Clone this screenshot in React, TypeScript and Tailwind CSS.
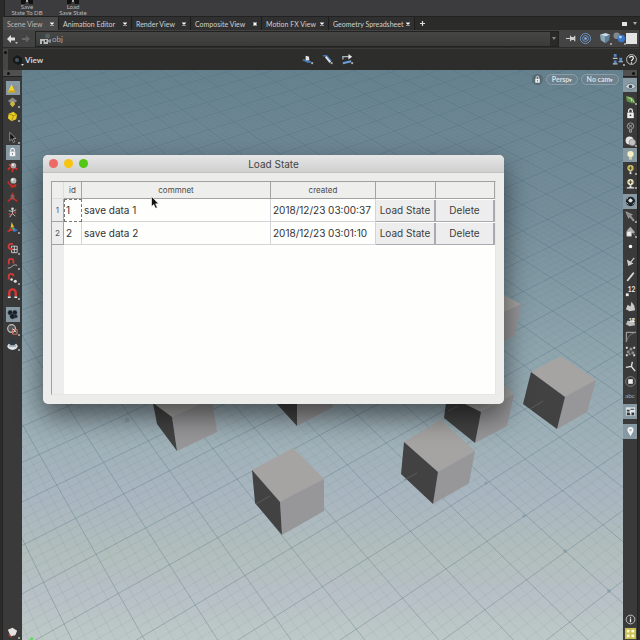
import React from "react";

type Pt = [number, number];

const UI = "font-['Lato','Noto_Sans',sans-serif]";

/* Ground plane to viewport projection */
function project(u: number, v: number): Pt {
  const w = 1 - 0.0358 * u + 0.024 * v;
  return [
    (14.55 * u + 45.4 * v + 128.3) / w - 22,
    (11.85 * u - 9.66 * v + 413.3) / w - 70,
  ];
}

function gridLines(major: boolean): string {
  const parts: string[] = [];
  const add = (a: Pt, b: Pt) =>
    parts.push(`M${a[0].toFixed(1)} ${a[1].toFixed(1)}L${b[0].toFixed(1)} ${b[1].toFixed(1)}`);
  for (let i = -150; i <= 100; i++) {
    if ((i % 5 === 0) !== major) continue;
    const u = i / 5;
    add(project(u, Math.max(-30, (0.0358 * u - 0.55) / 0.024)), project(u, 50));
  }
  for (let i = -125; i <= 225; i++) {
    if ((i % 5 === 0) !== major) continue;
    const v = i / 5;
    add(project(-32, v), project(Math.min(26, (0.55 + 0.024 * v) / 0.0358), v));
  }
  return parts.join("");
}

const MAJOR = gridLines(true);
const MINOR = gridLines(false);

const CUBES: { top: string; dark: string; side: string }[] = [
  { top: "500,293 521,304 505,313 490,305", dark: "", side: "500,314 521,304 515,336 500,343" },
  { top: "153,403 172,417 212,399 200,392", dark: "153,403 172,417 177,451 157,424", side: "172,417 212,399 217,432 177,451" },
  { top: "", dark: "276,403 297,390 297,426", side: "297,395 333,390 333,407 297,426" },
  { top: "447,395 481,412 514,394 500,382", dark: "447,395 481,412 475,443 444,418", side: "481,412 514,394 507,426 475,443" },
  { top: "404,442 441,420 475,451 438,472", dark: "404,442 438,472 433,504 401,474", side: "438,472 475,451 469,483 433,504" },
  { top: "531,372 561,356 596,380 565,397", dark: "531,372 565,397 557,429 523,404", side: "565,397 596,380 587,412 557,429" },
  { top: "252,470 293,448 324,479 280,502", dark: "252,470 280,502 282,535 255,503", side: "280,502 324,479 324,511 282,535" },
];

function Scene() {
  return (
    <svg className="absolute inset-0 h-full w-full" viewBox="0 0 601 570" preserveAspectRatio="xMidYMin slice" aria-hidden="true">
      <defs>
        <linearGradient id="sky" x1="0" y1="0" x2="0" y2="1">
          <stop offset="0" stopColor="#67828f" />
          <stop offset="0.25" stopColor="#758e9a" />
          <stop offset="0.5" stopColor="#8fa5ae" />
          <stop offset="0.66" stopColor="#a0b1b8" />
          <stop offset="0.75" stopColor="#a9b6c0" />
          <stop offset="0.85" stopColor="#b2bebc" />
          <stop offset="0.92" stopColor="#b7c0c6" />
          <stop offset="1" stopColor="#bdc9c6" />
        </linearGradient>
      </defs>
      <rect width="601" height="570" fill="url(#sky)" />
      <path d={MINOR} stroke="#5f7f8b" strokeOpacity="0.2" strokeWidth="0.6" fill="none" />
      <path d={MAJOR} stroke="#4f6f80" strokeOpacity="0.42" strokeWidth="0.8" fill="none" />
      <g transform="translate(-22 -70)">
        {CUBES.map((c, i) => (
          <g key={i}>
            <polygon points={c.top} fill="#a5a4a2" />
            <polygon points={c.side} fill="#979698" />
            <polygon points={c.dark} fill="#424243" />
          </g>
        ))}
        <path d="M256 504l14-8M530 409l13-8M404 480l13-7M448 411l10-5" stroke="#696d6f" strokeWidth="0.6" />
        <path d="M29 640l2-3 3 1-2 3z" fill="#69d66b" />
        <g fill="#8498a5" fillOpacity="0.8">
          <circle cx="127" cy="420" r="2.5" />
          <circle cx="486" cy="483" r="1.6" />
          <circle cx="524" cy="516" r="1.6" />
          <circle cx="565" cy="551" r="1.8" />
          <circle cx="609" cy="591" r="1.8" />
        </g>
      </g>
    </svg>
  );
}

const G: Record<string, React.ReactNode> = {
  cone: (<><circle cx="9.5" cy="6.5" r="3" fill="#8c8f91" /><path d="M6 2.5L10 11H2z" fill="#f3d62a" /><path d="M2 11h8l-1-1.8H3z" fill="#caa51c" /></>),
  diamonds: (<><path d="M7 1.5l5 4-5 3.5-5-3.5z" fill="#8b8b8b" /><path d="M7 5l3 3.500-3 3.500-3-3.500z" fill="#c9b740" /></>),
  cube: (<><path d="M3 4l5-2 4 3-1 5-5 2-4-3z" fill="#e8cb27" /><path d="M3 4l5 2 4-1M8 6l-2 6" stroke="#a98d12" fill="none" /></>),
  arrow: (<path d="M4 1.500v9l2.200-2 1.800 4 1.500-.8-1.800-3.700h3z" fill="#111" stroke="#b9b9b9" strokeWidth="0.7" />),
  lock: (<><rect x="4" y="6" width="6" height="5" fill="#f4f4f4" /><path d="M5 6V4.500a2 2 0 014 0V6" stroke="#f4f4f4" strokeWidth="1.200" fill="none" /><path d="M7 7.500v2" stroke="#7b8790" /></>),
  move: (<><path d="M2 9l3-2M12 9l-3-2M7 8v4M3 4l3 1" stroke="#d22f27" strokeWidth="2" /><circle cx="8" cy="5" r="3" fill="#a8aaac" /><circle cx="7.500" cy="4.200" r="1.200" fill="#eee" /></>),
  rotate: (<><path d="M2 6c1 4 6 6 9 3M5 12l6-1" stroke="#c22d27" strokeWidth="1.800" fill="none" /><circle cx="8" cy="5" r="3.200" fill="#b5b7b8" /><circle cx="7" cy="4" r="1.200" fill="#fff" /></>),
  scale: (<><path d="M7 2v5M2 11l4-3M12 11L8 8" stroke="#c22d27" strokeWidth="1.800" /><rect x="5" y="4" width="4" height="5" fill="#8e5a5a" /></>),
  pose: (<><path d="M7 4v4l-3 4M7 8l3 3M3 5l4 1 4-2" stroke="#c9c9c9" fill="none" /><circle cx="7" cy="3" r="1.400" fill="#ddd" /><circle cx="4" cy="9" r="1.100" fill="#d33" /><circle cx="10" cy="7" r="1.100" fill="#d33" /></>),
  handles: (<><path d="M6 1l3 6H5z" fill="#e4c12c" /><path d="M1 12l4-5 3 3z" fill="#d6342b" /><path d="M8 7l5 3-5 2z" fill="#3b7bd0" /><path d="M6 7l3 1-1 3z" fill="#59b947" /></>),
  magGrid: (<><path d="M6 4.500h6v7H6zM9 4.500v7M6 8h6" stroke="#ddd" strokeWidth="0.900" fill="none" /><path d="M7.500 2H5a2.800 2.800 0 000 5.500h2" stroke="#d33b38" strokeWidth="2" fill="none" /></>),
  magCurve: (<><path d="M2 12c5 0 5-5 10-3" stroke="#bbb" fill="none" /><path d="M3 8V4.500a2.500 2.500 0 015 0V7" stroke="#d33b38" strokeWidth="1.900" fill="none" /></>),
  magPoint: (<><path d="M3 8V4.500a2.500 2.500 0 015 0" stroke="#d33b38" strokeWidth="2" fill="none" /><circle cx="6" cy="8" r="1.300" fill="#eee" /><circle cx="10" cy="10" r="1.700" fill="#ddd" /></>),
  magnet: (<><path d="M3.500 10V6a3.500 3.500 0 017 0v4" stroke="#dc3733" strokeWidth="2.500" fill="none" /><path d="M2 11h3M9 11h3" stroke="#eee" strokeWidth="1.800" /></>),
  clover: (<g fill="#18212a" stroke="#4b5861" strokeWidth="0.500"><circle cx="4.500" cy="5" r="2.500" /><circle cx="9.500" cy="5" r="2.500" /><circle cx="7" cy="9" r="2.800" /><circle cx="10.500" cy="9" r="1.800" /></g>),
  ringBox: (<><circle cx="6" cy="6" r="4.200" stroke="#bfc4c6" strokeWidth="1.300" fill="#555" /><path d="M7 7h5v5H7z" fill="none" stroke="#d37c6c" /><path d="M7 6l4 4" stroke="#e5e5e5" /></>),
  dome: (<><ellipse cx="7" cy="9" rx="5.500" ry="3.800" fill="#dfe6ea" /><ellipse cx="7" cy="4.500" rx="4" ry="3.200" fill="#2f3a43" /><ellipse cx="7" cy="8.500" rx="4" ry="1" fill="#8ea0ac" /></>),
  brush: (<><path d="M2 4l5-2 5 3-2 5-5 1z" fill="#e5e1de" /><path d="M3 9l3 3" stroke="#b44" strokeWidth="1.500" /></>),
  eye: (<><path d="M1.500 8c3-4.500 8-4.500 11 0-3 4-8 4-11 0z" fill="#c9d2d7" stroke="#5b6870" strokeWidth="0.800" /><circle cx="7" cy="8" r="1.900" fill="#39444b" /></>),
  board: (<><path d="M2 3l8 2 2 6H8L3 9z" fill="#5e8f41" /><path d="M4 5l4 1v3M9 7l2 3" stroke="#d6e2c6" fill="none" /></>),
  padlock: (<><rect x="3.500" y="6" width="7" height="6" fill="#f1f1f1" /><path d="M5 6V4a2 2 0 014 0v2" stroke="#f1f1f1" strokeWidth="1.300" fill="none" /><circle cx="7" cy="9" r="1" fill="#444" /></>),
  bulbX: (<><circle cx="7" cy="5.500" r="3.500" stroke="#999" fill="none" /><path d="M5 3.500l4 4M9 3.500l-4 4M6 9v3h2V9" stroke="#aaa" fill="none" /></>),
  spheres: (<><circle cx="6" cy="6" r="4.300" fill="#e5e5e5" /><circle cx="9" cy="8" r="3.500" fill="#c2c2c2" stroke="#777" strokeWidth="0.600" /></>),
  bulb: (<><circle cx="7" cy="5.500" r="3.400" fill="#f5efc4" /><path d="M5.500 8.500h3v3h-3z" fill="#d2cfac" /></>),
  bulbY: (<><circle cx="7" cy="5.500" r="3.400" fill="#cfc36c" /><path d="M5 5.500h4M7 3.500v4" stroke="#4d4723" /><path d="M6 9h2v3H6z" fill="#ddd" /></>),
  bulbW: (<><circle cx="7" cy="5.500" r="3.400" fill="#ebe7c9" /><path d="M5 5.500h4M7 3.500v4" stroke="#4d4723" /><path d="M6 9h2v2H6zM3 11h8v1.500H3z" fill="#e7e7e7" /></>),
  ball: (<><circle cx="7" cy="7" r="5" fill="#1d252b" /><path d="M7 4l2 1.500-1 2h-2l-1-2zM2.500 8l2 2M9.500 10l2-2M3.500 4l1-1" fill="#e0e5e8" stroke="#e0e5e8" strokeWidth="0.800" /></>),
  feather: (<path d="M2 2l7 3-2 1 4 5-1 1-4-5-1 2z" fill="#888" stroke="#bdbdbd" strokeWidth="0.600" />),
  featherLock: (<><path d="M3 6l4-4 5 6-3 1z" fill="#ababab" /><path d="M3 7h5v5H3zM9 8l3 3" fill="#eee" stroke="#bbb" strokeWidth="0.600" /></>),
  dot: (<circle cx="7" cy="7" r="1.900" fill="#fff" />),
  hook: (<path d="M11 3L7 8M4 6l1 5 4-2z" stroke="#cfcfcf" strokeWidth="1.200" fill="#ccc" />),
  needle: (<path d="M4 11l4-5M8 6l2-2.500" stroke="#d6d6d6" strokeWidth="2" strokeLinecap="round" />),
  twelve: (<><text x="4" y="8" fontSize="7" fontWeight="700" fill="#eee" fontFamily="Lato">12</text><rect x="2" y="9" width="3" height="3" fill="#eee" /></>),
  hand: (<path d="M2 10l2-5 3 2 1-5 3 4 1 5-6 1z" fill="#c9c9c9" />),
  handNum: (<><path d="M2 10l2-4 3 1 3-4 2 8-6 1z" fill="#bdbdbd" /><text x="5" y="8" fontSize="6" fontWeight="700" fill="#fff" fontFamily="Lato">12</text></>),
  corner: (<><path d="M2.500 13V2.500H13" stroke="#bbb" fill="none" /><path d="M3 12c1-5 4-8 9-9" stroke="#777" fill="none" /></>),
  checker: (<g fill="#8b8b8b"><path d="M2 2h2v2H2zM10 2h2v2h-2zM2 10h2v2H2zM10 10h2v2h-2z" fill="#ddd" /><path d="M6 3h3v3H6zM3 6h3v3H3zM8 7h3v3H8zM5 9h2v2H5z" /></g>),
  axis: (<path d="M9 2L8 7l-6 1M8 7l4 5" stroke="#ddd" strokeWidth="1.500" fill="none" />),
  circleSq: (<><circle cx="7" cy="7" r="5.200" stroke="#888" fill="none" /><path d="M4.500 4.500h5v5h-5z" fill="#eee" /></>),
  abc: (<text x="1" y="9" fontSize="7" fill="#a5a5a5" fontFamily="Lato">abc</text>),
  photo: (<><rect x="2" y="2.500" width="10" height="9" fill="#dfe5e7" /><path d="M3 5h3v2H3zM7 4h4v1H7zM3 11V8h3l1 3zM8 8h3v3H8z" fill="#303b43" /></>),
  pin: (<><circle cx="7" cy="5.500" r="3.300" fill="#f4f4f4" /><path d="M4.500 7.500h5L7 12z" fill="#f4f4f4" /><circle cx="7" cy="5.500" r="1.400" fill="#b4bcc2" /></>),
  info: (<><circle cx="7" cy="7" r="4.700" stroke="#c9c9c9" fill="none" /><path d="M7 4v1M7 6v4" stroke="#eee" strokeWidth="1.400" /></>),
  layout: (<><rect x="1" y="1" width="12" height="12" fill="#c9bd55" /><path d="M3 3h3v3H3zM8 3h3v3H8zM3 8h3v3H3zM8 8h3v3H8z" fill="#fffbd0" /></>),
  camera: (<><circle cx="5" cy="4" r="2.500" fill="#3d4649" /><circle cx="9.500" cy="4" r="2.500" fill="#555e61" /><path d="M2 7h8v5H2z" fill="#b9bcbd" /><path d="M4 9h1.500v3H4zM7 8h1.500v2H7z" fill="#333" /><path d="M10 8l3-1v4l-3-1z" fill="#8d9193" /></>),
  viewCam: (<><path d="M2 5l4-3 5 3v5l-4 2-5-3z" fill="#16191b" /><circle cx="6" cy="7" r="2" fill="#48565e" /><path d="M10 11h3l-1.500 2z" fill="#ccc" /></>),
  nodeA: (<><path d="M2 8c3-2 3 4 9 1" stroke="#4476b4" strokeWidth="2" fill="none" /><path d="M5 3l4 1v4H5z" fill="#e4e4e4" /><path d="M9 4l2 5" stroke="#222" /><circle cx="12" cy="11" r="1.200" fill="#aaa" /></>),
  nodeB: (<><path d="M2 3h4l5 6" stroke="#4476b4" strokeWidth="1.800" fill="none" /><path d="M5 4l5 6" stroke="#dde2e8" strokeWidth="2" /><circle cx="11.500" cy="11" r="1.200" fill="#aaa" /></>),
  nodeC: (<><path d="M2 7V4h7" stroke="#aab3ba" strokeWidth="1.400" fill="none" /><path d="M2 11l9-2" stroke="#6fa2da" strokeWidth="2.200" /><path d="M8 1l4 3-4 3z" fill="#e8e8e8" /><circle cx="12" cy="11" r="1.200" fill="#aaa" /></>),
  thumb: (<path d="M1 7h5M6 4v6M6 6h4v2H6zM10.500 4v6" stroke="#ccc" strokeWidth="1.300" fill="#ccc" />),
  target: (<g stroke="#6f95c5" fill="none"><circle cx="7" cy="7" r="5.500" /><circle cx="7" cy="7" r="3.200" /><circle cx="7" cy="7" r="1.200" fill="#9cc0ea" /></g>),
  box3d: (<><path d="M1 3l6-2 5 2-5 2z" fill="#c5dbe8" /><path d="M1 3l6 2v7L2 9z" fill="#8aa9bd" /><path d="M7 5l5-2-1 6-4 3z" fill="#5f8096" /></>),
  balls3d: (<><circle cx="4" cy="4" r="3.500" fill="#82888c" /><circle cx="9" cy="7" r="4" fill="#3a78c8" /><circle cx="8" cy="5.500" r="1.500" fill="#b5d4fa" /></>),
  people: (<g fill="#5989c5"><path d="M3 1h3v3H3zM3 8h3v3H3zM9 5h3v4H9z" /><path d="M2 5h5v1.500H2zM2 11h5v1.500H2zM8 9h5v1H8z" fill="#b4c4d6" /></g>),
  help: (<><circle cx="7" cy="7" r="5.300" stroke="#ccc" fill="none" /><path d="M5 5.500c0-2.500 4-2.500 4 0C9 7 7 7 7 9M7 10v1.500" stroke="#eee" strokeWidth="1.300" fill="none" /></>),
};

function Glyph({ name, size = "size-[14px]" }: { name: string; size?: string }) {
  return <svg viewBox="0 0 14 14" className={`${size} shrink-0`} aria-hidden="true">{G[name]}</svg>;
}

function Tool({ name, on = false, tall = true, more = false }: { name: string; on?: boolean; tall?: boolean; more?: boolean }) {
  return (
    <button
      type="button"
      aria-label={name}
      className={`relative flex w-[14px] shrink-0 items-center justify-center ${tall ? "h-[15px]" : "h-[14px]"} ${on ? "bg-[#8799a3]" : ""}`}
    >
      <Glyph name={name} size="size-[13px]" />
      {more && <span className="absolute right-0 bottom-px size-[2px] bg-[#9a9a9a]" />}
    </button>
  );
}

const TABS = ["Scene View", "Animation Editor", "Render View", "Composite View", "Motion FX View", "Geometry Spreadsheet"];
const TAB_W = ["w-[56px]", "w-[73px]", "w-[59px]", "w-[71px]", "w-[67px]", "w-[86px]"];

const ROWS = [
  { id: 1, text: "save data 1", created: "2018/12/23 03:00:37" },
  { id: 2, text: "save data 2", created: "2018/12/23 03:01:10" },
];

const HEAD = "h-[17px] border-r border-b border-[#a3a3a3] bg-[#eeeeed] p-0 text-[8px] leading-[16px] font-normal text-[#4b4b4b]";
const CELL = "h-[23px] border-r border-b border-[#d3d3d8] px-[2px] py-0";
const PUSH = "block h-[22px] w-full border-r-2 border-b border-[#a9a9b0] bg-[#ededed] text-[10px] leading-[21px] text-[#3d3d3d]";

function LoadDialog() {
  return (
    <section
      aria-label="Load State"
      className="absolute top-[85px] left-[21px] flex h-[249px] w-[461px] flex-col overflow-hidden rounded-[5px] bg-[#ececeb] font-['Inter','Liberation_Sans',sans-serif] text-[10px] text-[#333] shadow-[0_12px_28px_rgba(0,0,0,0.55)]"
    >
      <header className="relative flex h-[18px] shrink-0 items-center gap-[6px] border-b border-[#c1c1c1] bg-linear-to-b from-[#e6e6e6] to-[#d0d0d0] px-[6px]">
        <button type="button" aria-label="Close" className="size-[9px] rounded-full bg-[#ee6a66]" />
        <button type="button" aria-label="Minimize" className="size-[9px] rounded-full bg-[#f8c40f]" />
        <button type="button" aria-label="Zoom" className="size-[9px] rounded-full bg-[#50c814]" />
        <h1 className="flex-1 pr-[45px] text-center leading-[18px] text-[#444]">Load State</h1>
      </header>
      <div className="flex flex-1 px-2 pt-2 pb-[9px]">
        <div className="flex flex-1 flex-col border border-[#a0a0a0] border-r-[#e6e6e6] border-b-[#e6e6e6] bg-linear-to-r from-[#ededed] from-[12px] to-[#fefefd] to-[12px]">
          <table className="w-full table-fixed border-separate border-spacing-0">
            <colgroup>
              <col className="w-[12px]" />
              <col className="w-[18px]" />
              <col />
              <col className="w-[105px]" />
              <col className="w-[60px]" />
              <col className="w-[59px]" />
            </colgroup>
            <thead>
              <tr>
                <th className="h-[17px] border-r border-b border-[#dddddd] bg-[#eeeeed] p-0" />
                <th scope="col" className={HEAD}>id</th>
                <th scope="col" className={HEAD}>commnet</th>
                <th scope="col" className={HEAD}>created</th>
                <th className={HEAD} />
                <th className={HEAD} />
              </tr>
            </thead>
            <tbody>
              {ROWS.map((r, i) => (
                <tr key={r.id}>
                  <th scope="row" className="h-[23px] border-r border-b border-[#a3a3a3] bg-[#ededed] p-0 text-[8px] font-normal text-[#555]">{r.id}</th>
                  <td className={i === 0 ? "h-[23px] border border-dashed border-[#777] px-px py-0" : CELL}>{r.id}</td>
                  <td className={CELL}>{r.text}</td>
                  <td className={`${CELL} whitespace-nowrap`}>{r.created}</td>
                  <td className="p-0"><button type="button" className={PUSH}>Load State</button></td>
                  <td className="p-0"><button type="button" className={PUSH}>Delete</button></td>
                </tr>
              ))}
            </tbody>
          </table>
        </div>
      </div>
    </section>
  );
}

function Shelf({ label, sub, width }: { label: string; sub: string; width: string }) {
  return (
    <button type="button" className={`flex h-[17px] flex-col items-center ${width}`}>
      <svg viewBox="0 0 12 4" className="h-[4px] w-[12px] shrink-0" aria-hidden="true">
        <path d="M0 0h12v4H8L7 1H5L4 4H0z" fill="#111" />
        <path d="M5 0h2v2H5z" fill="#aaa" />
      </svg>
      <span className="text-[6px] leading-[6px]">{label}</span>
      <span className="text-[6px] leading-[6px] whitespace-nowrap">{sub}</span>
    </button>
  );
}

export default function App() {
  return (
    <main className={`flex h-screen w-full flex-col overflow-hidden bg-[#2b2b2a] text-[#b9b9b9] ${UI}`}>
      <div className="ml-[4px] flex h-[17px] shrink-0 border-b border-l border-[#222] bg-[#3c3c3e] pl-[5px]">
        <Shelf label="Save" sub="State To DB" width="w-[34px]" />
        <Shelf label="Load" sub="Save State" width="ml-[12px] w-[34px]" />
      </div>

      <nav aria-label="Panes" className="ml-[3px] flex h-[13px] shrink-0 items-stretch bg-[#2b2b2a]">
        {TABS.map((t, i) => (
          <button
            key={t}
            type="button"
            className={`flex items-center justify-between border-r border-[#1d1d1d] pr-[4px] pl-[4px] text-[7px] leading-[12px] whitespace-nowrap ${TAB_W[i]} ${i === 0 ? "bg-[#4a4a4a]" : "bg-[#303030] text-[#d0d0d0]"}`}
          >
            {t}
            <svg viewBox="0 0 4 4" className="size-[4px] shrink-0" aria-hidden="true">
              <path d="M.5.5l3 3M3.500.5l-3 3" stroke="#fff" strokeWidth="1.300" />
            </svg>
          </button>
        ))}
        <button type="button" aria-label="Add tab" className="flex w-[14px] items-center justify-center">
          <svg viewBox="0 0 5 5" className="size-[5px]" aria-hidden="true"><path d="M2.500 0v5M0 2.500h5" stroke="#ddd" strokeWidth="1.200" /></svg>
        </button>
        <div className="ml-auto flex items-center gap-[6px] pr-[3px]">
          <span className="h-[4px] w-[5px] bg-[#e2e2e2]" />
          <svg viewBox="0 0 4 3" className="h-[3px] w-[4px]" aria-hidden="true"><path d="M0 0h4L2 3z" fill="#aaa" /></svg>
        </div>
      </nav>

      <div className="mr-px ml-[3px] flex h-[17px] shrink-0 items-center bg-[#434343]">
        <button type="button" aria-label="Back" className="ml-[3px] flex w-[14px]">
          <svg viewBox="0 0 12 10" className="h-[10px] w-[12px]" aria-hidden="true"><path d="M1 5l4-4v2.500h4v3H5V9z" fill="#ddd" /><path d="M9 8h3l-1.500 2z" fill="#bbb" /></svg>
        </button>
        <button type="button" aria-label="Forward" className="flex w-[12px]">
          <svg viewBox="0 0 12 10" className="h-[10px] w-[12px]" aria-hidden="true"><path d="M10 5L6 1.500V4H2v2h4v2.500z" fill="#666" /></svg>
        </button>
        <div className="ml-[3px] flex h-[16px] flex-1 items-center border border-[#222] bg-linear-to-b from-[#464644] to-[#3b3b39] pl-[2px]">
          <Glyph name="camera" />
          <input aria-label="Path" defaultValue="obj" className="min-w-0 flex-1 bg-transparent text-[8px] leading-[12px] text-[#aaa] outline-none" />
          <span className="flex h-full w-[8px] items-center justify-center bg-[#2a2a2a]">
            <svg viewBox="0 0 4 3" className="h-[3px] w-[4px]" aria-hidden="true"><path d="M0 0h4L2 3z" fill="#888" /></svg>
          </span>
        </div>
        <div className="flex items-center pr-[2px] pl-[5px]">
          <Tool name="thumb" />
          <Tool name="target" />
          <span className="w-[6px]" />
          <Tool name="box3d" more />
          <Tool name="balls3d" more />
          <button type="button" aria-label="Swatch" className="size-[11px] bg-[#e4e4e4]" />
        </div>
      </div>

      <div className="mt-px mr-px ml-[3px] flex h-[22px] shrink-0 items-center justify-between border-t border-[#3b3b3b] bg-[#2d2d2c]">
        <div className="flex h-full items-center">
          <span className="mr-[3px] h-full w-[5px] bg-[#464646] pt-[2px] pl-px"><span className="block size-[3px] rounded-full bg-[#111]" /></span>
          <Glyph name="viewCam" />
          <h2 className="text-[8px] leading-[12px] font-bold text-[#d5d5d5]">View</h2>
        </div>
        <div className="flex items-center gap-[6px]">
          <Tool name="nodeA" />
          <Tool name="nodeB" />
          <Tool name="nodeC" />
        </div>
        <div className="flex items-center">
          <Tool name="people" more />
          <Tool name="help" />
        </div>
      </div>

      <div className="flex min-h-0 flex-1">
        <aside aria-label="Tools" className="ml-[2px] flex w-[20px] shrink-0 flex-col items-center border-l border-[#252525] bg-[#3a3a3b]">
          <span className="mb-[4px] h-[7px] w-full shrink-0 border-b border-[#222] bg-[#505050] pt-[2px] pl-[4px]"><span className="block size-[3px] rounded-full bg-[#111]" /></span>
          <div className="flex flex-col">
            <Tool name="cone" on tall={false} more />
            <Tool name="diamonds" tall={false} more />
            <Tool name="cube" tall={false} more />
          </div>
          <div className="mt-[7px] flex flex-col">
            <Tool name="arrow" more />
            <Tool name="lock" on />
            <Tool name="move" />
            <Tool name="rotate" />
            <Tool name="scale" />
            <Tool name="pose" />
            <Tool name="handles" more />
          </div>
          <div className="mt-[6px] flex flex-col">
            <Tool name="magGrid" more />
            <Tool name="magCurve" more />
            <Tool name="magPoint" more />
            <Tool name="magnet" more />
          </div>
          <div className="mt-[6px] flex flex-col">
            <Tool name="clover" on more />
            <Tool name="ringBox" more />
            <Tool name="dome" more />
          </div>
          <div className="mt-auto">
            <Tool name="brush" more />
          </div>
        </aside>

        <section aria-label="Viewport" className="relative min-w-0 flex-1 bg-[#8aa0aa]">
          <Scene />
          <div className="relative flex justify-end gap-[3px] pt-[4px] pr-[4px] text-[7px] font-bold text-[#d9dfe2]">
            <button type="button" aria-label="Lock view" className="flex size-[11px] items-center justify-center rounded-full bg-[#566a74]">
              <Glyph name="padlock" size="size-[9px]" />
            </button>
            <button type="button" className="h-[11px] w-[32px] rounded-full border border-[#8c9fa9] bg-[#6c818c] leading-[9px] whitespace-nowrap">Persp<span className="text-[5px]">▾</span></button>
            <button type="button" className="h-[11px] w-[38px] rounded-full border border-[#8c9fa9] bg-[#6c818c] leading-[9px] whitespace-nowrap">No cam<span className="text-[5px]">▾</span></button>
          </div>
          <LoadDialog />
          <svg viewBox="0 0 8 13" className="absolute top-[126px] left-[129px] h-[13px] w-[8px]" aria-hidden="true">
            <path d="M.5.500v10l2.300-2L4.500 12.300l1.800-.8-1.700-3.700h3z" fill="#111" stroke="#fff" strokeWidth="0.600" />
          </svg>
        </section>

        <aside aria-label="Display options" className="mr-[2px] flex w-[15px] shrink-0 flex-col items-center border-r border-[#222] bg-[#3a3a3b]">
          <span className="mb-px flex h-[7px] w-full shrink-0 justify-end border-b border-[#222] bg-[#505050] pt-[2px] pr-[2px]"><span className="block size-[3px] rounded-full bg-[#111]" /></span>
          <div className="flex flex-col">
            <Tool name="eye" on tall={false} more />
            <Tool name="board" tall={false} more />
            <Tool name="padlock" tall={false} />
            <Tool name="bulbX" tall={false} />
            <Tool name="spheres" tall={false} more />
            <Tool name="bulb" on tall={false} more />
            <Tool name="bulbY" tall={false} more />
            <Tool name="bulbW" tall={false} more />
          </div>
          <div className="mt-[4px] flex flex-col">
            <Tool name="ball" on more />
            <Tool name="feather" more />
            <Tool name="featherLock" more />
            <Tool name="dot" />
            <Tool name="hook" />
            <Tool name="needle" />
            <Tool name="twelve" />
            <Tool name="hand" />
            <Tool name="handNum" />
            <Tool name="corner" />
            <Tool name="checker" />
            <Tool name="axis" />
            <Tool name="circleSq" />
            <Tool name="abc" />
            <Tool name="photo" on />
          </div>
          <div className="mt-[5px]">
            <Tool name="pin" on more />
          </div>
          <div className="mt-auto flex flex-col">
            <Tool name="info" tall={false} />
            <Tool name="layout" tall={false} />
          </div>
        </aside>
      </div>
    </main>
  );
}
